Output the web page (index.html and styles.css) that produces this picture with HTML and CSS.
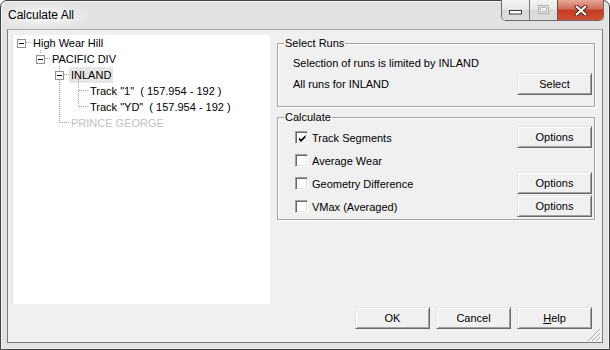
FILE: index.html
```html
<!DOCTYPE html>
<html lang="en">
<head>
  <meta charset="UTF-8">
  <meta name="viewport" content="width=device-width, initial-scale=1.0">
  <title>Calculate All</title>
  <link rel="stylesheet" href="styles.css">
</head>
<body>
  <div class="window">
    <div class="titlebar">
      <span class="title">Calculate All</span>
      <div class="caption-buttons">
        <span class="cap-btn min">
          <svg width="13" height="5" viewBox="0 0 13 5"><rect x="0.5" y="0.5" width="12" height="3.5" fill="#fff" stroke="#3a3a3a"/></svg>
        </span>
        <span class="cap-btn max">
          <svg width="11" height="9" viewBox="0 0 11 9"><rect x="0.5" y="0.5" width="10" height="8" fill="#e4e4e4" stroke="#b0b0b0"/><rect x="2.5" y="2.5" width="6" height="4" fill="#eeeeee" stroke="#bdbdbd"/></svg>
        </span>
        <span class="cap-btn close">
          <svg width="14" height="11" viewBox="0 0 14 11"><path d="M2.5 1.5 L11.5 9.5 M11.5 1.5 L2.5 9.5" stroke="#4a2a24" stroke-width="4" stroke-linecap="round"/><path d="M2.5 1.5 L11.5 9.5 M11.5 1.5 L2.5 9.5" stroke="#fff" stroke-width="2" stroke-linecap="round"/></svg>
        </span>
      </div>
    </div>

    <div class="client">
      <div class="main">
        <div class="tree">
          <!-- dotted connector lines of the tree -->
          <svg class="tree-lines" width="258" height="269" viewBox="0 0 258 269">
            <g stroke="#a0a0a0" stroke-width="1" stroke-dasharray="1 1" fill="none">
              <path d="M14 7.5 H20"/>
              <path d="M28.5 15 V19"/>
              <path d="M33 23.5 H39"/>
              <path d="M47.5 31 V88"/>
              <path d="M52 39.5 H58"/>
              <path d="M48 87.5 H58"/>
              <path d="M66.5 44 V72"/>
              <path d="M67 55.5 H77"/>
              <path d="M67 71.5 H77"/>
            </g>
          </svg>
          <div class="node lvl0"><span class="exp"></span><span class="label">High Wear Hill</span></div>
          <div class="node lvl1"><span class="exp"></span><span class="label">PACIFIC DIV</span></div>
          <div class="node lvl2"><span class="exp"></span><span class="label selected">INLAND</span></div>
          <div class="node lvl3"><span class="spacer"></span><span class="label">Track "1"  ( 157.954 - 192 )</span></div>
          <div class="node lvl3"><span class="spacer"></span><span class="label">Track "YD"  ( 157.954 - 192 )</span></div>
          <div class="node lvl2"><span class="spacer"></span><span class="label disabled">PRINCE GEORGE</span></div>
        </div>

        <div class="side">
          <div class="group runs">
            <span class="group-title">Select Runs</span>
            <p class="line">Selection of runs is limited by INLAND</p>
            <div class="row">
              <span>All runs for INLAND</span>
              <button class="btn">Select</button>
            </div>
          </div>

          <div class="group calc">
            <span class="group-title">Calculate</span>
            <div class="row">
              <label class="check"><span class="box"><svg width="9" height="9" viewBox="0 0 9 9"><path d="M1 3.5 L3 5.5 L7.5 1 L7.5 3.5 L3 8 L1 6 Z" fill="#000"/></svg></span>Track Segments</label>
              <button class="btn">Options</button>
            </div>
            <div class="row">
              <label class="check"><span class="box"></span>Average Wear</label>
            </div>
            <div class="row">
              <label class="check"><span class="box"></span>Geometry Difference</label>
              <button class="btn">Options</button>
            </div>
            <div class="row">
              <label class="check"><span class="box"></span>VMax (Averaged)</label>
              <button class="btn">Options</button>
            </div>
          </div>
        </div>
      </div>

      <div class="footer">
        <button class="btn">OK</button>
        <button class="btn">Cancel</button>
        <button class="btn"><u>H</u>elp</button>
      </div>

      <svg class="grip" width="14" height="14" viewBox="0 0 14 14">
        <g stroke-width="1">
          <path d="M13 1 L1 13 M13 5 L5 13 M13 9 L9 13" stroke="#a6a6a6"/>
          <path d="M14 2 L2 14 M14 6 L6 14 M14 10 L10 14" stroke="#ffffff"/>
        </g>
      </svg>
    </div>
  </div>
</body>
</html>
```

FILE: styles.css
```css
/* General Styles */
html, body {
  margin: 0;
  background: #ffffff;
}

body {
  font-family: "Liberation Sans", Arial, sans-serif;
  font-size: 11px;
  color: #000;
}

.window {
  box-sizing: border-box;
  width: 610px;
  height: 350px;
  border: 1px solid #424242;
  border-radius: 7px 7px 0 0;
  background: #e2e2e2;
  box-shadow: inset 1px 1px 0 #f4f4f4, inset -1px -1px 0 #f0f0f0;
  padding: 0 6px 6px 6px;
}

/* Title bar */
.titlebar {
  height: 28px;
  margin: 0 -6px;
  padding: 0 5px 0 7px;
  display: flex;
  justify-content: space-between;
  align-items: flex-start;
  background: radial-gradient(ellipse 52px 13px at 40px 15px, #f3f3f3 30%, rgba(243, 243, 243, 0) 100%);
}

.title {
  font-size: 12px;
  line-height: 28px;
  color: #000;
}

.caption-buttons {
  display: flex;
  height: 20px;
  margin-top: -1px;
  border: 1px solid #6b6b6b;
  border-top: none;
  border-radius: 0 0 5px 5px;
  overflow: hidden;
}

.cap-btn {
  display: flex;
  align-items: center;
  justify-content: center;
  height: 20px;
}

.cap-btn.min {
  width: 27px;
  background: linear-gradient(#f3f3f3, #e9e9e9 45%, #d8d8d8 50%, #dedede);
}

.cap-btn.min svg {
  margin-top: 4px;
}

.cap-btn.max {
  width: 27px;
  border-left: 1px solid #7a7a7a;
  background: linear-gradient(#f3f3f3, #e9e9e9 45%, #d8d8d8 50%, #dedede);
}

.cap-btn.max svg {
  margin-top: -2px;
}

.cap-btn.close {
  width: 45px;
  border-left: 1px solid #7a4a40;
  background: linear-gradient(#e8a896, #d46b55 45%, #c43c22 50%, #d24d31);
}

/* Client area */
.client {
  position: relative;
  box-sizing: border-box;
  width: 596px;
  height: 314px;
  border: 1px solid #7a7a7a;
  border-top-color: #a9a9a9;
  background: #f0f0f0;
  padding: 5px 0 0 4px;
}

.main {
  display: flex;
  height: 269px;
}

/* Tree view */
.tree {
  position: relative;
  box-sizing: border-box;
  width: 258px;
  height: 269px;
  background: #ffffff;
  border-left: 1px solid #e2e2e2;
}

.tree-lines {
  position: absolute;
  left: -1px;
  top: 0;
}

.node {
  display: flex;
  align-items: center;
  height: 16px;
  white-space: pre;
}

.node.lvl0 { padding-left: 4px; }
.node.lvl1 { padding-left: 23px; }
.node.lvl2 { padding-left: 42px; }
.node.lvl3 { padding-left: 61px; }

.exp, .spacer {
  position: relative;
  box-sizing: border-box;
  width: 9px;
  height: 9px;
  margin-right: 7px;
  flex: none;
}

.exp {
  border: 1px solid #919191;
  background: #ffffff;
}

.exp::after {
  content: "";
  position: absolute;
  left: 1px;
  top: 3px;
  width: 5px;
  height: 1px;
  background: #000;
}

.label {
  line-height: 16px;
}

.label.selected {
  background: #e6e6e6;
  padding: 0 2px;
  margin-left: -2px;
}

.label.disabled {
  color: #c2c2c2;
}

/* Right side group boxes */
.side {
  width: 318px;
  margin-left: 7px;
  padding-top: 8px;
}

.group {
  position: relative;
  box-sizing: border-box;
  border: 1px solid #a4a4a4;
  box-shadow: 1px 1px 0 #ffffff, inset 1px 1px 0 #ffffff;
}

.group-title {
  position: absolute;
  top: -7px;
  left: 6px;
  padding: 0 1px;
  line-height: 13px;
  background: #f0f0f0;
}

.group.runs {
  height: 64px;
  padding: 12px 2px 0 15px;
}

.line {
  margin: 0 0 3px;
  height: 14px;
  line-height: 14px;
}

.row {
  display: flex;
  justify-content: space-between;
  align-items: center;
  height: 22px;
}

.group.calc {
  height: 103px;
  margin-top: 10px;
  padding: 8px 2px 0 17px;
}

.group.calc .row {
  height: 23px;
  align-items: flex-start;
}

.check {
  display: flex;
  align-items: center;
  height: 23px;
}

.box {
  box-sizing: border-box;
  width: 13px;
  height: 13px;
  margin-right: 4px;
  background: #ffffff;
  border: 1px solid;
  border-color: #a0a0a0 #ffffff #ffffff #a0a0a0;
  box-shadow: inset 1px 1px 0 #696969, inset -1px -1px 0 #e3e3e3;
  display: flex;
  align-items: center;
  justify-content: center;
}

.box svg {
  margin: 1px 0 0 1px;
}

/* Buttons */
.btn {
  box-sizing: border-box;
  width: 75px;
  height: 22px;
  padding: 0;
  font-family: "Liberation Sans", Arial, sans-serif;
  font-size: 11px;
  color: #000;
  background: #f0f0f0;
  border: 1px solid;
  border-color: #e3e3e3 #696969 #696969 #e3e3e3;
  box-shadow: inset 1px 1px 0 #ffffff, inset -1px -1px 0 #a0a0a0;
  border-radius: 0;
}

.footer {
  display: flex;
  justify-content: flex-end;
  gap: 6px;
  margin-top: 3px;
  padding-right: 10px;
}

.grip {
  position: absolute;
  right: 1px;
  bottom: 0;
}
```
